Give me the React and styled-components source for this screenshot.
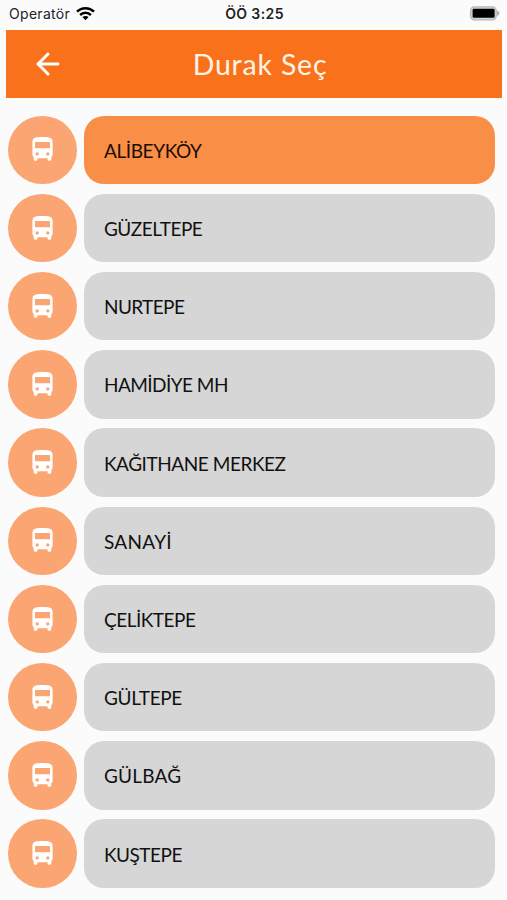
import React, { useState } from 'react';
import styled, { createGlobalStyle } from 'styled-components';

const GlobalStyle = createGlobalStyle`
  * {
    box-sizing: border-box;
  }

  body {
    margin: 0;
    background: #fbfbfb;
    overflow: hidden;
  }
`

const Screen = styled.div`
  width: 100%;
  height: 900px;
  overflow: hidden;
  font-family: Lato, sans-serif;
`

const StatusBar = styled.div`
  height: 30.3px;
  padding: 0 7px 3px 9px;
  display: grid;
  grid-template-columns: 1fr auto 1fr;
  align-items: center;
  font-family: Inter, sans-serif;
  font-size: 14px;
  color: #222;
`

const Carrier = styled.div`
  display: flex;
  align-items: center;
  gap: 6px;
  letter-spacing: 0.3px;
`

const Clock = styled.div`
  font-weight: 600;
  letter-spacing: 0.4px;
`

const Battery = styled.svg`
  justify-self: end;
`

const Header = styled.header`
  height: 68px;
  margin: 0 5px 0 6px;
  padding: 0 24px 0 30px;
  display: grid;
  grid-template-columns: 62px 1fr 56px;
  align-items: center;
  background: #f9721b;
  color: #fff;
`

const BackButton = styled.button`
  display: flex;
  padding: 0;
  border: 0;
  background: none;
  color: inherit;
`

const Title = styled.h1`
  margin: 0;
  text-align: center;
  font-size: 28.5px;
  font-weight: 400;
  line-height: 34px;
  letter-spacing: 0.8px;
  color: #fff4e6;
`

const StopList = styled.ul`
  margin: 0;
  padding: 17.4px 12px 0 8.3px;
  list-style: none;
  display: flex;
  flex-direction: column;
  gap: 9.8px;
`

const StopRow = styled.li`
  display: flex;
  gap: 7.3px;
  height: 68.4px;
`

const StopIcon = styled.div`
  flex: none;
  width: 68.4px;
  padding-bottom: 1px;
  display: flex;
  align-items: center;
  justify-content: center;
  border-radius: 50%;
  background: #fba572;
  color: #fff;
`

const StopCard = styled.div`
  flex: 1;
  display: flex;
  align-items: center;
  padding: 1px 20px 0;
  border-radius: 20px;
  background: ${({ selected }) => selected ? '#f98e47' : '#d6d6d6'};
  color: ${({ selected }) => selected ? '#1c0d03' : '#111'};
  font-size: 19px;
  letter-spacing: ${({ spacing }) => spacing}px;
  white-space: nowrap;
`

const stops = [
  { name: 'ALİBEYKÖY', spacing: -0.4 },
  { name: 'GÜZELTEPE', spacing: -0.5 },
  { name: 'NURTEPE', spacing: -0.6 },
  { name: 'HAMİDİYE MH', spacing: -0.55 },
  { name: 'KAĞITHANE MERKEZ', spacing: -0.45 },
  { name: 'SANAYİ', spacing: 0.3 },
  { name: 'ÇELİKTEPE', spacing: -0.5 },
  { name: 'GÜLTEPE', spacing: -0.35 },
  { name: 'GÜLBAĞ', spacing: 0.2 },
  { name: 'KUŞTEPE', spacing: -0.5 },
];

const WifiIcon = () => (
  <svg width="19" height="15" viewBox="0 0 19 15" fill="none" stroke="#000" strokeWidth="2.5">
    <path d="M1 5.6C5.7 1 13.3 1 18 5.6" />
    <path d="M4.1 9C7.1 6.1 11.9 6.1 14.9 9" />
    <path d="M6.4 11C8.2 9.5 10.8 9.5 12.6 11L9.5 14.2z" fill="#000" stroke="none" />
  </svg>
)

const BatteryIcon = () => (
  <Battery width="31" height="15" viewBox="0 0 31 15">
    <rect x="1.6" y="0.8" width="25.6" height="13" rx="3.8" fill="#d4d4d4" stroke="#b8b8b8" strokeWidth="1.3" />
    <rect x="3.6" y="2.8" width="22" height="9" rx="1.4" fill="#000" />
    <path d="M28 4.6C31.2 5.4 31.2 9.2 28 10z" fill="#b4b4b4" />
  </Battery>
)

const BackIcon = () => (
  <svg width="24" height="24" viewBox="0 0 24 24" fill="none" stroke="currentColor" strokeWidth="2.9" strokeLinecap="round" strokeLinejoin="round">
    <path d="M12 2L2 12L12 22M2 12H22" />
  </svg>
)

const BusIcon = () => (
  <svg width="21" height="24" viewBox="0 0 21 24" fill="currentColor">
    <path
      fillRule="evenodd"
      d="M5 .3Q10.5-.4 16 .3Q20.6.8 20.6 5V17.2Q20.6 19.2 19.3 20.3V22.2Q19.3 23.7 17.8 23.7H17Q15.5 23.7 15.5 22.2V21.2H5.5V22.2Q5.5 23.7 4 23.7H3.2Q1.7 23.7 1.7 22.2V20.3Q.4 19.2 .4 17.2V5Q.4.8 5 .3ZM3 5V11.2H18V5ZM5.2 15.2A1.7 1.7 0 1 0 5.2 18.6A1.7 1.7 0 1 0 5.2 15.2ZM15.8 15.2A1.7 1.7 0 1 0 15.8 18.6A1.7 1.7 0 1 0 15.8 15.2Z"
    />
  </svg>
)

function App() {
  const [selected, setSelected] = useState('ALİBEYKÖY');

  return (
    <Screen>
      <GlobalStyle />
      <StatusBar>
        <Carrier>Operatör <WifiIcon /></Carrier>
        <Clock>ÖÖ 3:25</Clock>
        <BatteryIcon />
      </StatusBar>
      <Header>
        <BackButton aria-label="Geri"><BackIcon /></BackButton>
        <Title>Durak Seç</Title>
      </Header>
      <StopList>
        {stops.map(({ name, spacing }) => (
          <StopRow key={name} onClick={() => setSelected(name)}>
            <StopIcon><BusIcon /></StopIcon>
            <StopCard selected={name === selected} spacing={spacing}>{name}</StopCard>
          </StopRow>
        ))}
      </StopList>
    </Screen>
  )
}

export default App;
